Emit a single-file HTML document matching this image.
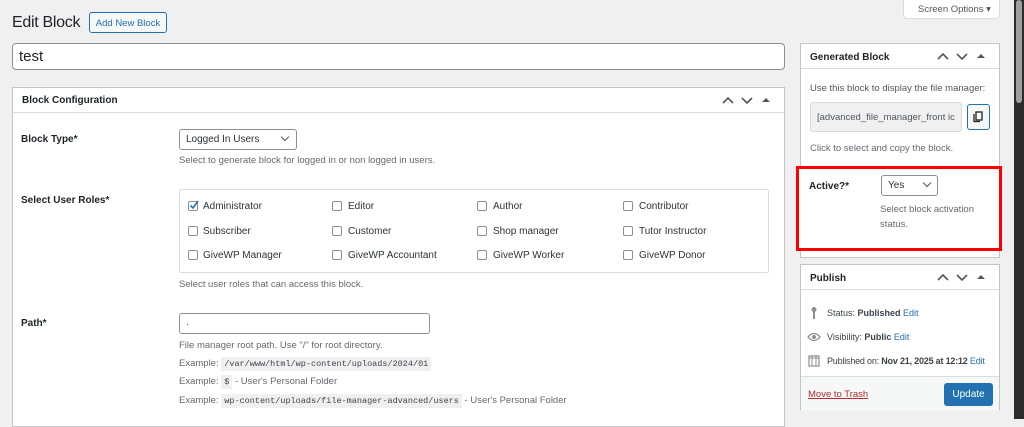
<!DOCTYPE html>
<html><head><style>
*{box-sizing:border-box;margin:0;padding:0}
body{width:1024px;height:419px;overflow:hidden;background:#f0f0f1;font-family:"Liberation Sans",sans-serif;font-size:10px;color:#3c434a;position:relative}
.a{position:absolute}
.box{position:absolute;background:#fff;border:1px solid #c3c4c7}
.hd{height:25px;border-bottom:1px solid #dcdcde;font-weight:bold;font-size:10px;color:#1d2327;padding:7px 9px;position:relative}
.arr{position:absolute;right:6px;top:7px}
.lbl{font-weight:bold;color:#1d2327;font-size:10px}
.desc{color:#646970;font-size:9.5px}
.cb{position:absolute;width:10px;height:10px;border:1px solid #8c8f94;border-radius:2px;background:#fff}
.ct{position:absolute;font-size:10px;color:#2c3338}
code{background:#f0f0f1;font-family:"Liberation Mono",monospace;font-size:8.5px;padding:2px 3px;color:#3c434a}
a{color:#2271b1}
.chev{display:inline-block;width:6px;height:6px;border-right:1.5px solid #50575e;border-bottom:1.5px solid #50575e;transform:rotate(45deg)}
</style></head><body>
<div class="a" style="left:12px;top:14px;font-size:16px;letter-spacing:-0.3px;color:#1d2327">Edit Block</div>
<div class="a" style="left:89px;top:12px;width:78px;height:21px;border:1px solid #2271b1;border-radius:3px;background:#f6f7f7;color:#2271b1;font-size:9.5px;padding:5px 0;text-align:center">Add New Block</div>
<div class="a" style="left:903px;top:-4px;width:97px;height:23px;border:1px solid #dcdcde;background:#fff;border-radius:0 0 4px 4px;color:#50575e;font-size:9.5px;padding:7px 0 0 14px">Screen Options &#9662;</div>
<div class="a" style="left:12px;top:43px;width:773px;height:27px;border:1px solid #8c8f94;border-radius:4px;background:#fff;font-size:15px;color:#1d2327;padding:4px 6px">test</div>

<div class="box" style="left:12px;top:87px;width:773px;height:340px">
<div class="hd">Block Configuration<svg class="arr" width="56" height="10" viewBox="0 0 56 10"><path d="M1 8l5-5 5 5M20 3l5 5 5-5" fill="none" stroke="#50575e" stroke-width="1.6"/><path d="M40 7l4-4 4 4z" fill="#50575e"/></svg></div>
<div class="a lbl" style="left:8px;top:46px">Block Type*</div>
<div class="a" style="left:166px;top:41px;width:118px;height:21px;border:1px solid #8c8f94;border-radius:3px;font-size:10px;color:#2c3338;padding:4px 6px">Logged In Users<span class="chev" style="position:absolute;right:8px;top:4px"></span></div>
<div class="a desc" style="left:166px;top:67px">Select to generate block for logged in or non logged in users.</div>
<div class="a lbl" style="left:8px;top:107px">Select User Roles*</div>
<div class="a" style="left:166px;top:101px;width:590px;height:84px;border:1px solid #dcdcde;border-radius:2px"></div>
<div class="cb" style="left:175px;top:113px"></div><svg class="a" style="left:175px;top:111px" width="12" height="12"><path d="M2.5 6.5l2.5 2.5 5-7" fill="none" stroke="#2271b1" stroke-width="1.6"/></svg><div class="ct" style="left:190px;top:113px">Administrator</div>
<div class="cb" style="left:319px;top:113px"></div><div class="ct" style="left:335px;top:113px">Editor</div>
<div class="cb" style="left:464px;top:113px"></div><div class="ct" style="left:480px;top:113px">Author</div>
<div class="cb" style="left:610px;top:113px"></div><div class="ct" style="left:626px;top:113px">Contributor</div>
<div class="cb" style="left:175px;top:138px"></div><div class="ct" style="left:190px;top:138px">Subscriber</div>
<div class="cb" style="left:319px;top:138px"></div><div class="ct" style="left:335px;top:138px">Customer</div>
<div class="cb" style="left:464px;top:138px"></div><div class="ct" style="left:480px;top:138px">Shop manager</div>
<div class="cb" style="left:610px;top:138px"></div><div class="ct" style="left:626px;top:138px">Tutor Instructor</div>
<div class="cb" style="left:175px;top:162px"></div><div class="ct" style="left:190px;top:162px">GiveWP Manager</div>
<div class="cb" style="left:319px;top:162px"></div><div class="ct" style="left:335px;top:162px">GiveWP Accountant</div>
<div class="cb" style="left:464px;top:162px"></div><div class="ct" style="left:480px;top:162px">GiveWP Worker</div>
<div class="cb" style="left:610px;top:162px"></div><div class="ct" style="left:626px;top:162px">GiveWP Donor</div>
<div class="a desc" style="left:166px;top:191px">Select user roles that can access this block.</div>
<div class="a lbl" style="left:8px;top:230px">Path*</div>
<div class="a" style="left:166px;top:225px;width:251px;height:21px;border:1px solid #8c8f94;border-radius:3px;padding:3px 6px;font-size:10px">.</div>
<div class="a desc" style="left:166px;top:252px">File manager root path. Use "/" for root directory.</div>
<div class="a desc" style="left:166px;top:270px">Example: <code>/var/www/html/wp-content/uploads/2024/01</code></div>
<div class="a desc" style="left:166px;top:288px">Example: <code>$</code> - User's Personal Folder</div>
<div class="a desc" style="left:166px;top:307px">Example: <code>wp-content/uploads/file-manager-advanced/users</code> - User's Personal Folder</div>
</div>

<div class="box" style="left:800px;top:43px;width:200px;height:215px">
<div class="hd" style="padding-top:8px">Generated Block<svg class="arr" width="56" height="10" viewBox="0 0 56 10"><path d="M1 8l5-5 5 5M20 3l5 5 5-5" fill="none" stroke="#50575e" stroke-width="1.6"/><path d="M40 7l4-4 4 4z" fill="#50575e"/></svg></div>
<div class="a desc" style="left:9px;top:39px;color:#50575e">Use this block to display the file manager:</div>
<div class="a" style="left:9px;top:58px;width:152px;height:30px;background:#f0f0f1;border:1px solid #dcdcde;border-radius:3px;padding:9px 6px;font-size:9.5px;color:#50575e;overflow:hidden;white-space:nowrap">[advanced_file_manager_front ic</div>
<div class="a" style="left:166px;top:60px;width:23px;height:26px;border:1px solid #2271b1;border-radius:3px;background:#f6f7f7">
<svg width="21" height="24" viewBox="0 0 21 24"><rect x="8" y="7" width="6" height="8" fill="none" stroke="#1d2327" stroke-width="1.3"/><path d="M6 9v7.5h6" fill="none" stroke="#1d2327" stroke-width="1.3"/></svg></div>
<div class="a desc" style="left:9px;top:99px;color:#646970">Click to select and copy the block.</div>
</div>
<div class="a" style="left:796px;top:166px;width:206px;height:85px;border:3px solid #f00;background:#fff"></div>
<div class="a lbl" style="left:809px;top:181px">Active?*</div>
<div class="a" style="left:881px;top:175px;width:57px;height:21px;border:1px solid #8c8f94;border-radius:3px;padding:4px 6px;font-size:10px;color:#2c3338">Yes<span class="chev" style="position:absolute;right:7px;top:4px"></span></div>
<div class="a desc" style="left:880px;top:202px;line-height:15px;color:#646970">Select block activation<br>status.</div>

<div class="box" style="left:800px;top:264px;width:200px;height:146px">
<div class="hd" style="padding-top:8px">Publish<svg class="arr" width="56" height="10" viewBox="0 0 56 10"><path d="M1 8l5-5 5 5M20 3l5 5 5-5" fill="none" stroke="#50575e" stroke-width="1.6"/><path d="M40 7l4-4 4 4z" fill="#50575e"/></svg></div>
<svg class="a" style="left:7px;top:41px" width="12" height="14"><circle cx="6" cy="3.5" r="2.5" fill="#8c8f94"/><rect x="5" y="5" width="2" height="8" fill="#8c8f94"/></svg>
<div class="a" style="left:26px;top:43px;font-size:9px;white-space:nowrap">Status: <b>Published</b> <a>Edit</a></div>
<svg class="a" style="left:6px;top:67px" width="14" height="10"><path d="M1 5Q7-2 13 5Q7 12 1 5z" fill="none" stroke="#8c8f94" stroke-width="1.3"/><circle cx="7" cy="5" r="2" fill="#8c8f94"/></svg>
<div class="a" style="left:26px;top:67px;font-size:9px;white-space:nowrap">Visibility: <b>Public</b> <a>Edit</a></div>
<svg class="a" style="left:7px;top:89px" width="12" height="13"><rect x="1" y="2" width="10" height="10" fill="none" stroke="#8c8f94" stroke-width="1.2"/><path d="M1 4h10M4 1v11M8 1v11" stroke="#8c8f94" stroke-width="1"/></svg>
<div class="a" style="left:26px;top:91px;font-size:9px;white-space:nowrap;letter-spacing:-0.2px">Published on: <b>Nov 21, 2025 at 12:12</b> <a>Edit</a></div>
<div class="a" style="left:0;top:111px;width:198px;height:34px;background:#f6f7f7;border-top:1px solid #dcdcde"></div>
<div class="a" style="left:7px;top:124px;font-size:9.5px;color:#b32d2e;text-decoration:underline">Move to Trash</div>
<div class="a" style="left:143px;top:118px;width:49px;height:23px;background:#2271b1;border-radius:3px;color:#fff;font-size:10px;text-align:center;padding-top:6px">Update</div>
</div>

<div class="a" style="left:1014px;top:0;width:10px;height:419px;background:#2b2b2b"></div>
<div class="a" style="left:1016px;top:0;width:6px;height:103px;background:#9f9f9f;border-radius:3px"></div>
</body></html>
